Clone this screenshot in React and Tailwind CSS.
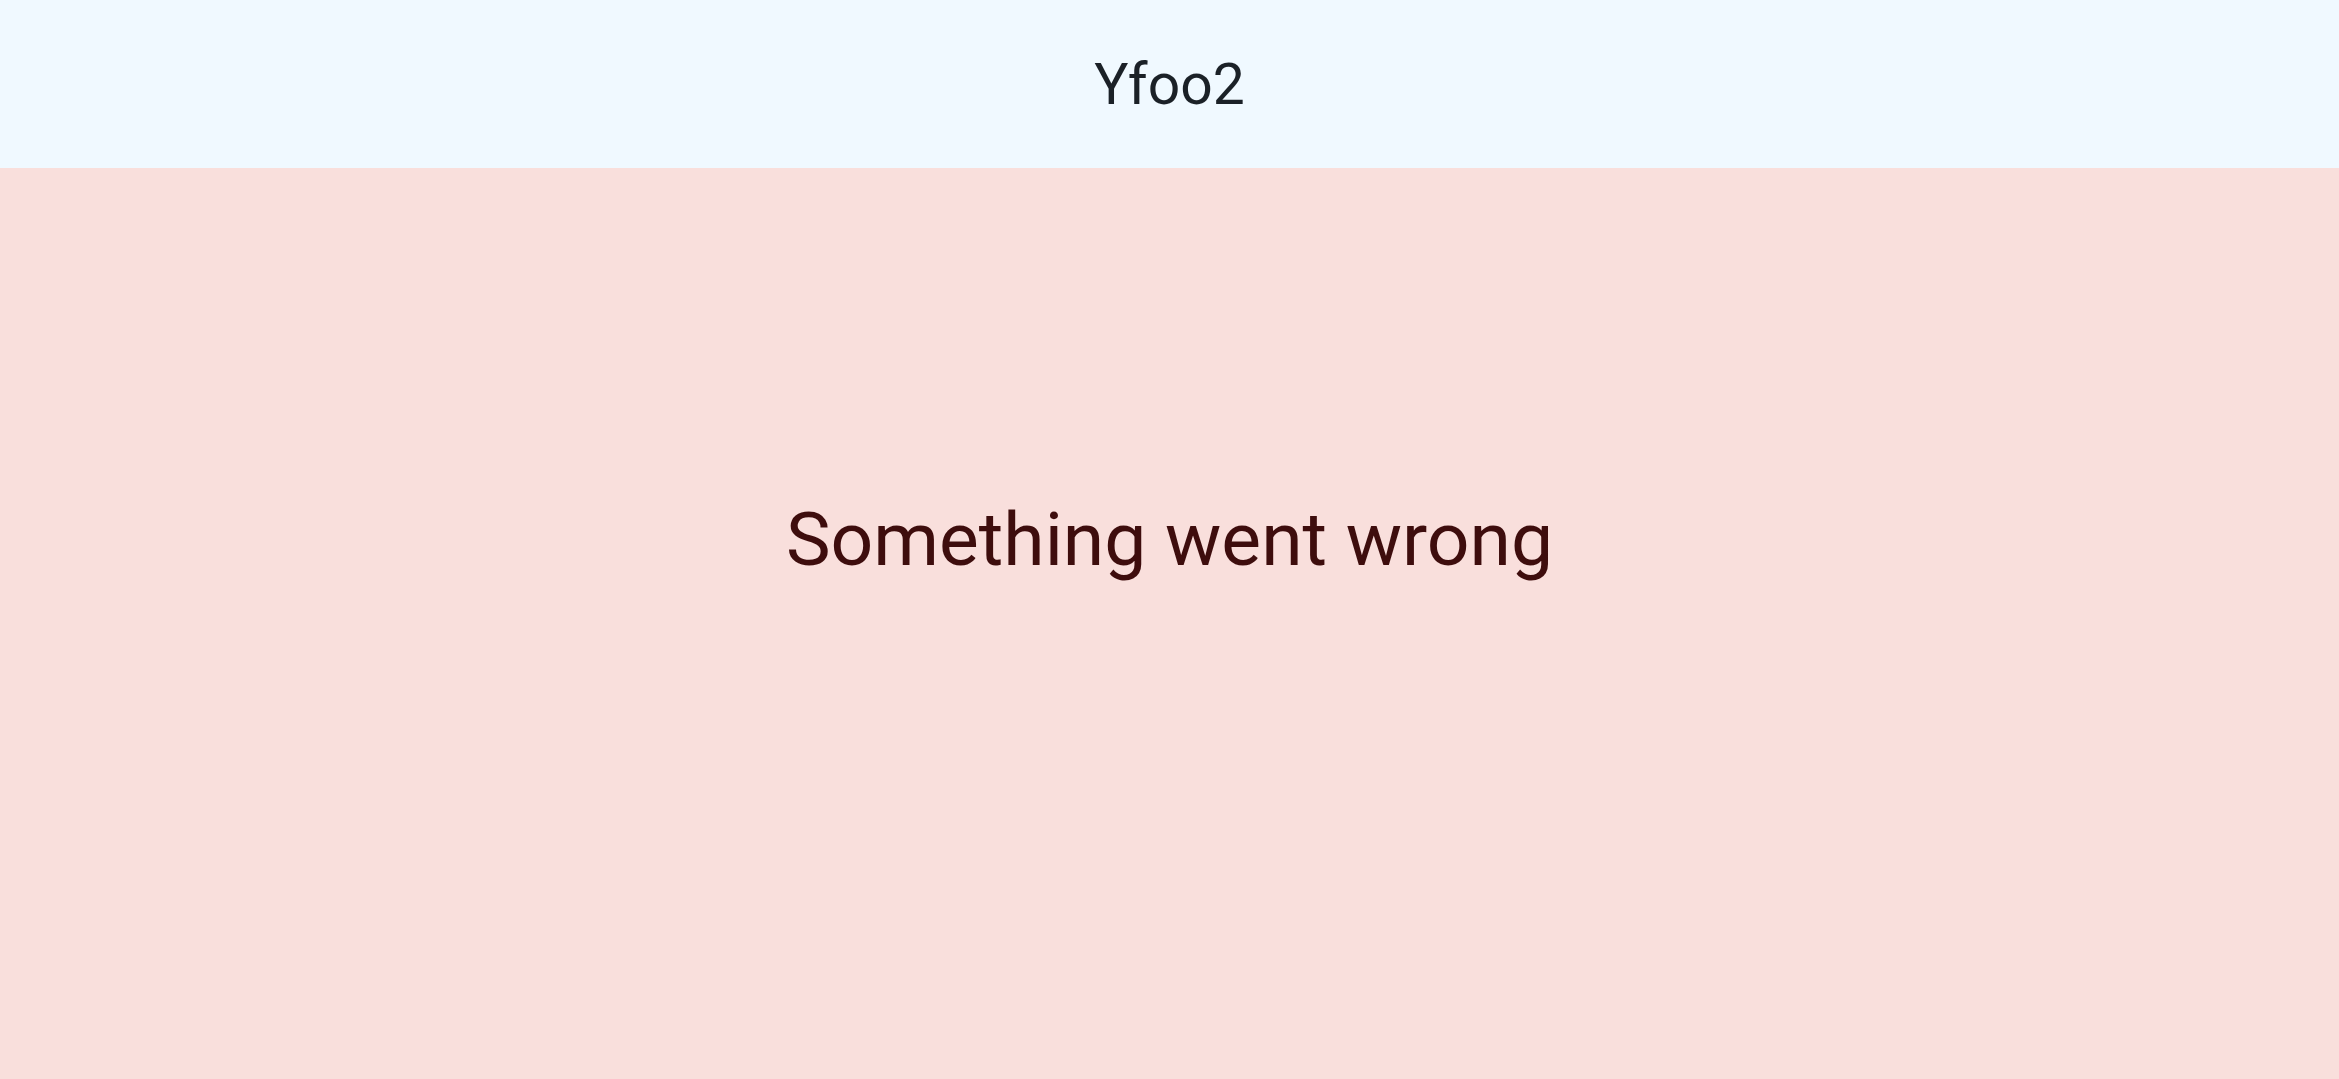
export default function App() {
  return (
    <div className="flex h-screen flex-col font-['Roboto',sans-serif]">
      {/* Top bar */}
      <header className="flex h-[168px] shrink-0 items-center justify-center bg-[#f0f9ff]">
        <h1 className="text-[57px] leading-none text-[#1b2127]">Yfoo2</h1>
      </header>

      {/* Error state */}
      <main className="flex flex-1 items-center justify-center bg-[#f9dfdc] pb-[168px]">
        <p className="text-[75px] leading-none text-[#3e0d0d]">Something went wrong</p>
      </main>
    </div>
  );
}
